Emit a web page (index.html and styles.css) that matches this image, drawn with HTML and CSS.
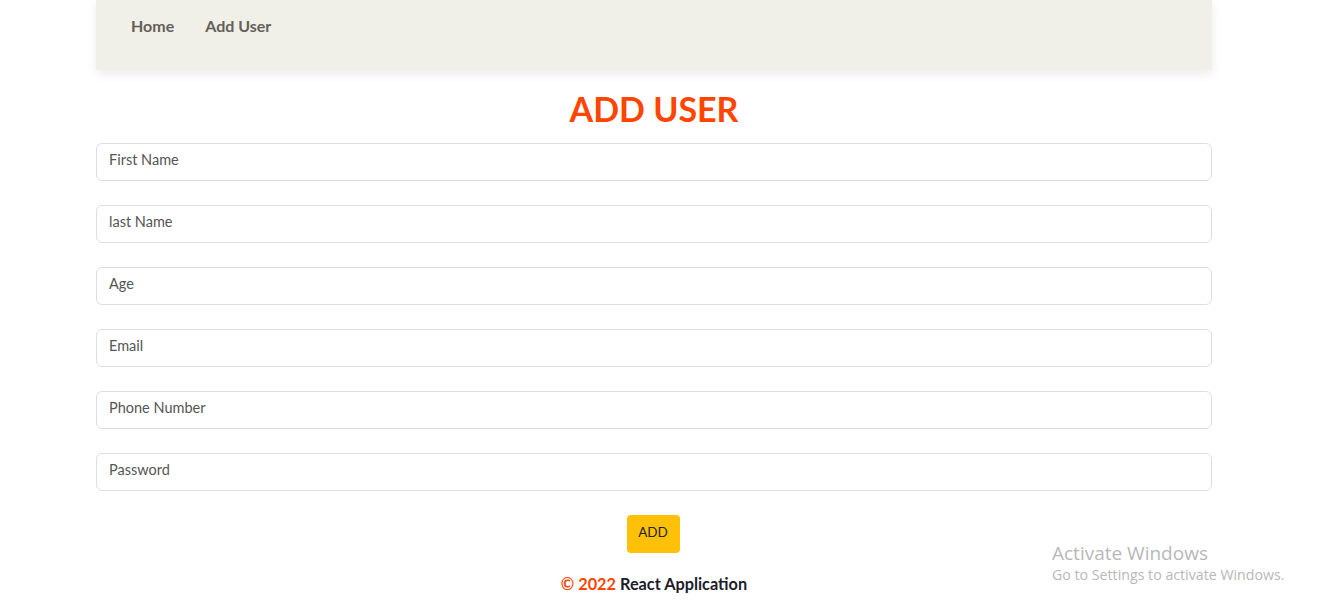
FILE: index.html
```html
<!DOCTYPE html>
<html>
<head>
<meta charset="utf-8">
<link rel="stylesheet" href="styles.css">
</head>
<body>
<div class="container">
  <nav class="navbar">
    <a class="nav-link" href="#">Home</a>
    <a class="nav-link" href="#">Add User</a>
  </nav>
  <h1 class="title">ADD USER</h1>
  <form class="form">
    <input class="field" type="text" placeholder="First Name">
    <input class="field" type="text" placeholder="last Name">
    <input class="field" type="text" placeholder="Age">
    <input class="field" type="text" placeholder="Email">
    <input class="field" type="text" placeholder="Phone Number">
    <input class="field" type="password" placeholder="Password">
    <div class="actions"><button class="btn" type="button">ADD</button></div>
  </form>
  <footer class="footer"><span class="accent">© 2022</span> React Application</footer>
</div>
<div class="watermark">
  <div class="wm-title">Activate Windows</div>
  <div class="wm-sub">Go to Settings to activate Windows.</div>
</div>
</body>
</html>
```
FILE: styles.css
```css
* { box-sizing: border-box; }
html, body { margin: 0; padding: 0; background: #fff; }
body { font-family: Lato, "Open Sans", sans-serif; color: #222; }
.container { width: 1116px; margin-left: 96px; }
.navbar {
  height: 70px;
  background: #f0efe8;
  box-shadow: 0 4px 10px rgba(0,0,0,0.08);
  display: flex;
  align-items: flex-start;
  padding: 16px 0 0 35px;
  gap: 31px;
}
.nav-link {
  color: #646058;
  text-decoration: none;
  font-weight: 700;
  font-size: 16px;
  line-height: 20px;
}
.title {
  margin: 17px 0 12px;
  text-align: center;
  font-size: 34px;
  line-height: 44px;
  font-weight: 700;
  color: #ff4500;
  letter-spacing: 0;
}
.form { display: flex; flex-direction: column; gap: 24px; }
.field {
  width: 100%;
  height: 38px;
  border: 1px solid #dedde3;
  border-radius: 6px;
  padding: 0 12px 6px;
  font-family: Lato, "Open Sans", sans-serif;
  font-size: 14.5px;
  color: #444;
  outline: none;
}
.field::placeholder { color: #555; }
.actions { display: flex; justify-content: center; padding-right: 2px; }
.btn {
  width: 53px;
  height: 38px;
  background: #ffc107;
  border: none;
  border-radius: 4px;
  font-family: Lato, "Open Sans", sans-serif;
  font-size: 13.5px;
  color: #222;
  padding: 0 0 4px;
}
.footer {
  margin-top: 21px;
  text-align: center;
  font-weight: 700;
  font-size: 16.3px;
  line-height: 20px;
  color: #1c1c2a;
}
.accent { color: #ff4500; }
.watermark {
  position: absolute;
  left: 1052px;
  top: 541px;
  font-family: "Open Sans", "Liberation Sans", sans-serif;
  color: #b8b8b8;
}
.wm-title { font-size: 19px; line-height: 24px; }
.wm-sub { font-size: 14.2px; line-height: 20px; }
```
